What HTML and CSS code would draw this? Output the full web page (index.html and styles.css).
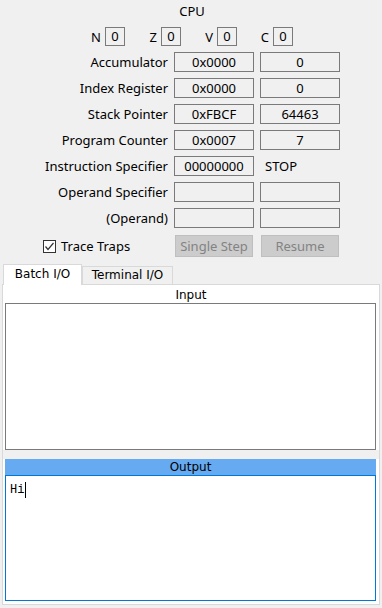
FILE: index.html
```html
<!DOCTYPE html>
<html>
<head>
<meta charset="utf-8">
<link rel="stylesheet" href="styles.css">
</head>
<body>
<div class="app">
  <div class="cpu-title">CPU</div>
  <div class="flags">
    <div class="flag"><span class="flag-label">N</span><span class="flag-box">0</span></div>
    <div class="flag"><span class="flag-label">Z</span><span class="flag-box">0</span></div>
    <div class="flag"><span class="flag-label">V</span><span class="flag-box">0</span></div>
    <div class="flag"><span class="flag-label">C</span><span class="flag-box">0</span></div>
  </div>
  <div class="regs">
    <div class="reg-label">Accumulator</div><div class="field">0x0000</div><div class="field">0</div>
    <div class="reg-label">Index Register</div><div class="field">0x0000</div><div class="field">0</div>
    <div class="reg-label">Stack Pointer</div><div class="field">0xFBCF</div><div class="field">64463</div>
    <div class="reg-label">Program Counter</div><div class="field">0x0007</div><div class="field">7</div>
    <div class="reg-label">Instruction Specifier</div><div class="field">00000000</div><div class="plain">STOP</div>
    <div class="reg-label">Operand Specifier</div><div class="field"></div><div class="field"></div>
    <div class="reg-label">(Operand)</div><div class="field"></div><div class="field"></div>
    <label class="trace"><span class="check"><svg width="11" height="11" viewBox="0 0 11 11"><path d="M1.5 5.5 L4 8.5 L9.5 2" fill="none" stroke="#333" stroke-width="1.2"/></svg></span>Trace Traps</label>
    <div class="btn">Single Step</div><div class="btn btn2">Resume</div>
  </div>
  <div class="tabs">
    <div class="tab active">Batch I/O</div>
    <div class="tab">Terminal I/O</div>
  </div>
  <div class="panel">
    <div class="io-label">Input</div>
    <div class="input-box"></div>
    <div class="splitter"></div>
    <div class="io-label out">Output</div>
    <div class="output-box"><span class="mono">Hi</span><span class="caret"></span></div>
  </div>
</div>
</body>
</html>
```
FILE: styles.css
```css
html, body {
  margin: 0;
  padding: 0;
  background: #f0f0f0;
}
body {
  font-family: "Noto Sans", "Open Sans", sans-serif;
  font-size: 13px;
  color: #000;
  width: 382px;
  height: 608px;
  overflow: hidden;
}
.app {
  display: flex;
  flex-direction: column;
}
.cpu-title {
  text-align: center;
  height: 16px;
  line-height: 16px;
  margin-top: 3px;
  padding-left: 2px;
}
.flags {
  display: flex;
  gap: 16px;
  padding-left: 85px;
  margin-top: 8px;
  height: 19px;
}
.flag {
  display: flex;
  align-items: center;
  gap: 4px;
}
.flag-label {
  width: 16px;
  text-align: right;
}
.flag-box {
  box-sizing: border-box;
  width: 20px;
  height: 19px;
  border: 1px solid #7a7a7a;
  text-align: center;
  line-height: 17px;
}
.regs {
  display: grid;
  grid-template-columns: 168px 80px 80px;
  grid-auto-rows: 20px;
  column-gap: 6px;
  row-gap: 6px;
  margin-top: 6px;
}
.reg-label {
  text-align: right;
  line-height: 20px;
  white-space: nowrap;
}
.field {
  box-sizing: border-box;
  border: 1px solid #7a7a7a;
  text-align: center;
  line-height: 18px;
}
.plain {
  line-height: 20px;
  padding-left: 5px;
}
.trace {
  display: flex;
  align-items: center;
  padding-left: 43px;
  height: 22px;
  margin-top: 1px;
  white-space: nowrap;
}
.check {
  box-sizing: border-box;
  width: 13px;
  height: 13px;
  border: 1px solid #333;
  background: #fff;
  margin-right: 5px;
  display: flex;
  align-items: center;
  justify-content: center;
}
.btn {
  box-sizing: border-box;
  height: 22px;
  margin-top: 1px;
  margin-left: 1px;
  width: 78px;
  background: #cccccc;
  border: 1px solid #bfbfbf;
  color: #838383;
  text-align: center;
  line-height: 20px;
}
.tabs {
  display: flex;
  align-items: flex-end;
  padding-left: 3px;
  margin-top: 10px;
  height: 20px;
  font-family: "DejaVu Sans", sans-serif;
  font-size: 12px;
}
.tab {
  box-sizing: border-box;
  height: 18px;
  border: 1px solid #d9d9d9;
  border-bottom: none;
  background: #f0f0f0;
  line-height: 17px;
  width: 91px;
  text-align: center;
}
.tab.active {
  width: 79px;
  background: #fff;
  line-height: 18px;
  position: relative;
  z-index: 1;
  margin-bottom: -1px;
  height: 21px;
}
.panel {
  box-sizing: border-box;
  margin-left: 2px;
  width: 378px;
  height: 321px;
  border: 1px solid #d9d9d9;
  background: #fff;
  display: flex;
  flex-direction: column;
  padding: 0 2px 3px 2px;
}
.io-label {
  font-family: "DejaVu Sans", sans-serif;
  font-size: 12px;
  text-align: center;
  height: 18px;
  line-height: 21px;
  color: #000;
}
.input-box {
  box-sizing: border-box;
  height: 147px;
  border: 1px solid #7a7a7a;
  background: #fff;
  margin-right: 1px;
}
.splitter {
  height: 9px;
  background: #f0f0f0;
  margin: 0 -2px;
}
.io-label.out {
  background: #66aaf2;
  height: 16px;
  line-height: 17px;
  margin-right: 1px;
}
.output-box {
  box-sizing: border-box;
  flex: 1;
  border: 1px solid #0078d7;
  margin-right: 1px;
  padding: 6px 0 0 4px;
  display: flex;
  align-items: flex-start;
}
.mono {
  font-family: "Liberation Mono", "Courier New", monospace;
  font-size: 12px;
  line-height: 14px;
  margin-top: 1px;
}
.caret {
  width: 1px;
  height: 16px;
  background: #000;
  margin-left: 1px;
}
```
